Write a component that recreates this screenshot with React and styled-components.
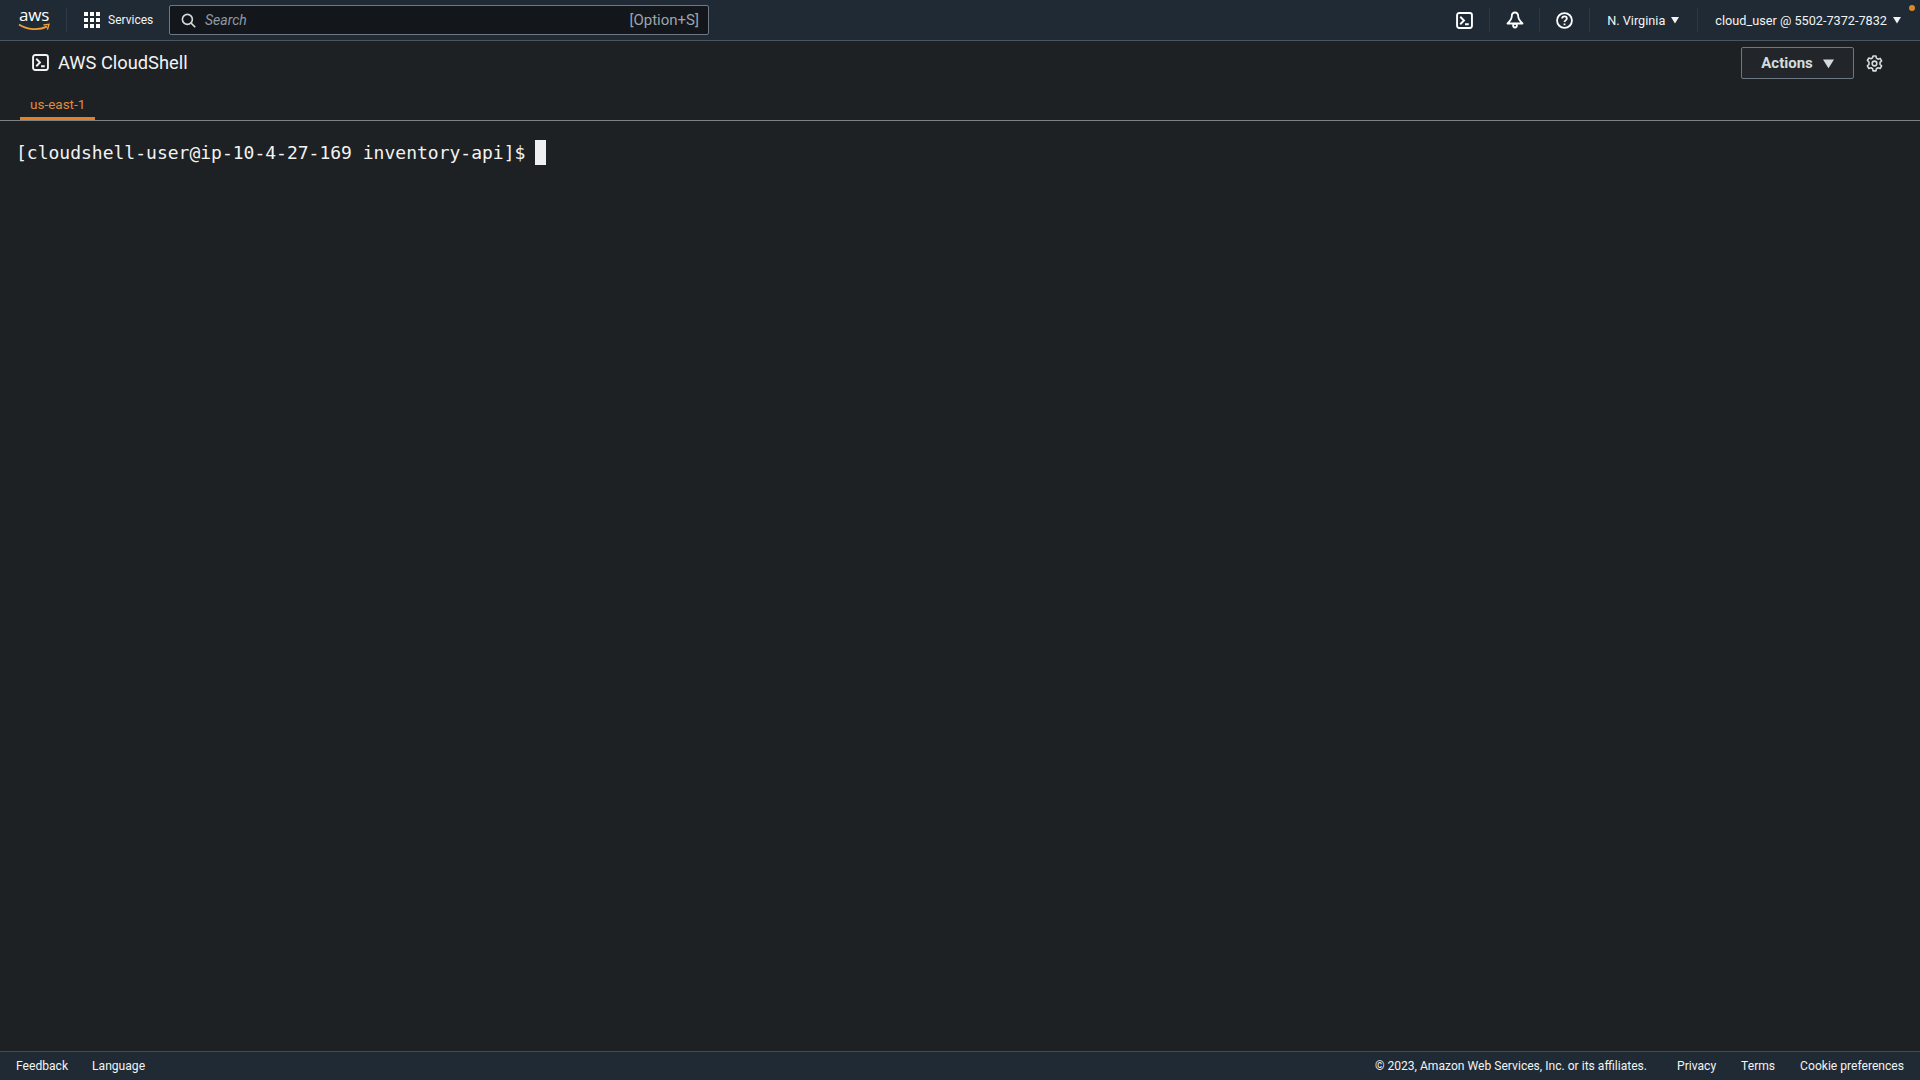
import React from 'react'
import styled, { createGlobalStyle } from 'styled-components'

const Global = createGlobalStyle`
  html, body { margin: 0; padding: 0; background: #1e2124; }
  body { font-family: Roboto, "Liberation Sans", sans-serif; color: #f2f3f3; }
`

const Page = styled.div`
  height: 100vh;
  display: flex;
  flex-direction: column;
  overflow: hidden;
  position: relative;
`

const TopBar = styled.header`
  height: 40px;
  flex: none;
  display: flex;
  align-items: center;
  background: #1f2a35;
  border-bottom: 1px solid #4a5560;
`

const LogoBox = styled.div`
  width: 66px;
  height: 40px;
  padding-left: 18px;
  box-sizing: border-box;
  display: flex;
  flex-direction: column;
  align-items: flex-start;
`

const LogoText = styled.span`
  font-family: "Open Sans", sans-serif;
  font-size: 17px;
  line-height: 17px;
  margin-top: 6px;
  margin-left: 1px;
  letter-spacing: -0.2px;
  color: #ffffff;
`

const Divider = styled.span`
  width: 1px;
  height: 24px;
  flex: none;
  background: #2c3846;
`

const ServicesButton = styled.div`
  display: flex;
  align-items: center;
  gap: 8px;
  margin-left: 17px;
  font-size: 12px;
  color: #f2f3f3;
  width: 85px;
`

const SearchBox = styled.div`
  width: 540px;
  height: 30px;
  box-sizing: border-box;
  display: flex;
  align-items: center;
  padding: 0 9px 0 11px;
  background: #13171b;
  border: 1px solid #6d7883;
  border-radius: 2px;
  font-size: 14px;
`

const SearchLabel = styled.span`
  margin-left: 9px;
  font-style: italic;
  color: #8f9aa5;
  flex: 1;
`

const Shortcut = styled.span`
  font-size: 15px;
  color: #9aa5b0;
`

const TopRight = styled.div`
  margin-left: auto;
  display: flex;
  align-items: center;
  height: 39px;
  padding-right: 19px;
`

const IconSlot = styled.div`
  width: 49px;
  display: flex;
  justify-content: center;
  align-items: center;
  color: #ffffff;
`

const MenuText = styled.div`
  display: flex;
  align-items: center;
  gap: 6px;
  padding: 0 18px 0 17px;
  font-size: 12.7px;
  color: #f2f3f3;
  &:last-child { padding-right: 0; }
`

const Notice = styled.span`
  position: absolute;
  top: 5px;
  right: 5px;
  width: 6px;
  height: 6px;
  border-radius: 50%;
  background: #d98a29;
`

const TitleRow = styled.div`
  height: 44px;
  flex: none;
  display: flex;
  align-items: center;
  padding: 0 37px 0 32px;
  box-sizing: border-box;
`

const TitleIcon = styled.div`
  display: flex;
  margin-bottom: 1px;
`

const Title = styled.h1`
  margin: 0 0 1px 9px;
  font-size: 18.3px;
  font-weight: 400;
  color: #f2f3f3;
`

const ActionsButton = styled.div`
  margin-left: auto;
  width: 113px;
  height: 32px;
  box-sizing: border-box;
  display: flex;
  align-items: center;
  justify-content: center;
  gap: 10px;
  border: 1px solid #6d7883;
  border-radius: 2px;
  background: #22262a;
  font-size: 15px;
  font-weight: 700;
  color: #d5dbdb;
`

const GearSlot = styled.div`
  margin-left: 12px;
  display: flex;
  color: #d5dbdb;
`

const TabRow = styled.div`
  height: 36px;
  flex: none;
  box-sizing: border-box;
  padding-left: 20px;
  display: flex;
  border-bottom: 1px solid #7b8288;
`

const Tab = styled.div`
  width: 75px;
  height: 35px;
  box-sizing: border-box;
  padding: 11px 0 0 10px;
  border-bottom: 3px solid #e8801f;
  font-size: 13.5px;
  line-height: 16px;
  color: #e08a3c;
`

const Terminal = styled.main`
  flex: 1;
  padding: 19px 0 0 16px;
`

const PromptLine = styled.div`
  display: flex;
  align-items: center;
  font-family: "DejaVu Sans Mono", "Liberation Mono", monospace;
  font-size: 18px;
  line-height: 25px;
  color: #f2f3f3;
  white-space: pre;
`

const Cursor = styled.span`
  width: 11px;
  height: 25px;
  margin-left: 10px;
  background: #eef0f1;
`

const Footer = styled.footer`
  height: 28px;
  flex: none;
  display: flex;
  align-items: center;
  padding: 0 16px;
  background: #1f2a35;
  border-top: 1px solid #414d5a;
  font-size: 12.1px;
  color: #f2f3f3;
`

const FootLeft = styled.div`
  display: flex;
  gap: 24px;
`

const FootRight = styled.div`
  margin-left: auto;
  display: flex;
  gap: 25px;
`

const Copyright = styled.span`
  margin-right: 5px;
`

const Caret = ({ size = 8 }) => (
  <svg width={size} height={size} viewBox="0 0 8 8" fill="currentColor">
    <path d="M0 1h8L4 7.5z" />
  </svg>
)

const ShellIcon = () => (
  <svg width="17" height="17" viewBox="0 0 16 16" fill="none" stroke="currentColor" strokeWidth="1.8">
    <rect x="1" y="1" width="14" height="14" rx="2" />
    <path d="M4 4.5 7.5 8 4 11.5M8.5 11.5H12" />
  </svg>
)

const BellIcon = () => (
  <svg width="18" height="18" viewBox="0 0 18 18" fill="none" stroke="currentColor" strokeWidth="1.8" strokeLinejoin="round">
    <path d="M9 1.5C6.8 1.5 5.8 3.2 5.8 5.2c0 2.8-2 5-4.3 7.3h15c-2.3-2.3-4.3-4.5-4.3-7.3 0-2-1-3.7-3.2-3.7z" />
    <circle cx="9" cy="14.6" r="1.9" />
  </svg>
)

const HelpIcon = () => (
  <svg width="17" height="17" viewBox="0 0 16 16" fill="none" stroke="currentColor" strokeWidth="1.7">
    <circle cx="8" cy="8" r="7" />
    <path d="M5.8 6.2C5.8 5 6.8 4.2 8 4.2s2.2.8 2.2 2c0 1.7-2.2 1.7-2.2 3.3" />
    <path d="M8 10.8v1.6" />
  </svg>
)

const GridIcon = () => (
  <svg width="16" height="16" viewBox="0 0 16 16" fill="#ffffff">
    {[0, 6, 12].map(y =>
      [0, 6, 12].map(x => <rect key={`${x}-${y}`} x={x} y={y} width="4" height="4" />)
    )}
  </svg>
)

const SearchIcon = () => (
  <svg width="15" height="15" viewBox="0 0 16 16" fill="none" stroke="#d5dbdb" strokeWidth="1.7">
    <circle cx="6.8" cy="6.8" r="5.3" />
    <path d="m10.8 10.8 4.4 4.4" />
  </svg>
)

const GearIcon = () => (
  <svg width="17" height="17" viewBox="0 0 16 16" fill="none" stroke="currentColor" strokeWidth="1.5" strokeLinejoin="round">
    <path d="M6.6 1h2.8l.4 2 1.5.9 2-.7 1.4 2.4-1.5 1.4v1.9l1.5 1.3-1.4 2.5-2-.7-1.5.9-.4 2H6.6l-.4-2-1.5-.9-2 .7-1.4-2.5 1.5-1.3V6.6L1.3 5.2l1.4-2.4 2 .7 1.5-.9z" />
    <circle cx="8" cy="8" r="2.2" />
  </svg>
)

const Smile = () => (
  <svg width="33" height="9" viewBox="0 0 33 9" fill="none">
    <path d="M1 1.5C9 7 21 7.5 29 3.6" stroke="#f29d38" strokeWidth="1.8" />
    <path d="M25.5 2 31 1.4 29.4 6.6" stroke="#f29d38" strokeWidth="1.4" />
  </svg>
)

export default function App() {
  return (
    <Page>
      <Global />
      <TopBar>
        <LogoBox>
          <LogoText>aws</LogoText>
          <Smile />
        </LogoBox>
        <Divider />
        <ServicesButton>
          <GridIcon />
          Services
        </ServicesButton>
        <SearchBox>
          <SearchIcon />
          <SearchLabel>Search</SearchLabel>
          <Shortcut>[Option+S]</Shortcut>
        </SearchBox>
        <TopRight>
          <IconSlot><ShellIcon /></IconSlot>
          <Divider />
          <IconSlot><BellIcon /></IconSlot>
          <Divider />
          <IconSlot><HelpIcon /></IconSlot>
          <Divider />
          <MenuText>N. Virginia <Caret /></MenuText>
          <Divider />
          <MenuText>cloud_user @ 5502-7372-7832 <Caret /></MenuText>
        </TopRight>
        <Notice />
      </TopBar>
      <TitleRow>
        <TitleIcon><ShellIcon /></TitleIcon>
        <Title>AWS CloudShell</Title>
        <ActionsButton>Actions <Caret size={11} /></ActionsButton>
        <GearSlot><GearIcon /></GearSlot>
      </TitleRow>
      <TabRow>
        <Tab>us-east-1</Tab>
      </TabRow>
      <Terminal>
        <PromptLine>
          [cloudshell-user@ip-10-4-27-169 inventory-api]$<Cursor />
        </PromptLine>
      </Terminal>
      <Footer>
        <FootLeft>
          <span>Feedback</span>
          <span>Language</span>
        </FootLeft>
        <FootRight>
          <Copyright>© 2023, Amazon Web Services, Inc. or its affiliates.</Copyright>
          <span>Privacy</span>
          <span>Terms</span>
          <span>Cookie preferences</span>
        </FootRight>
      </Footer>
    </Page>
  )
}
